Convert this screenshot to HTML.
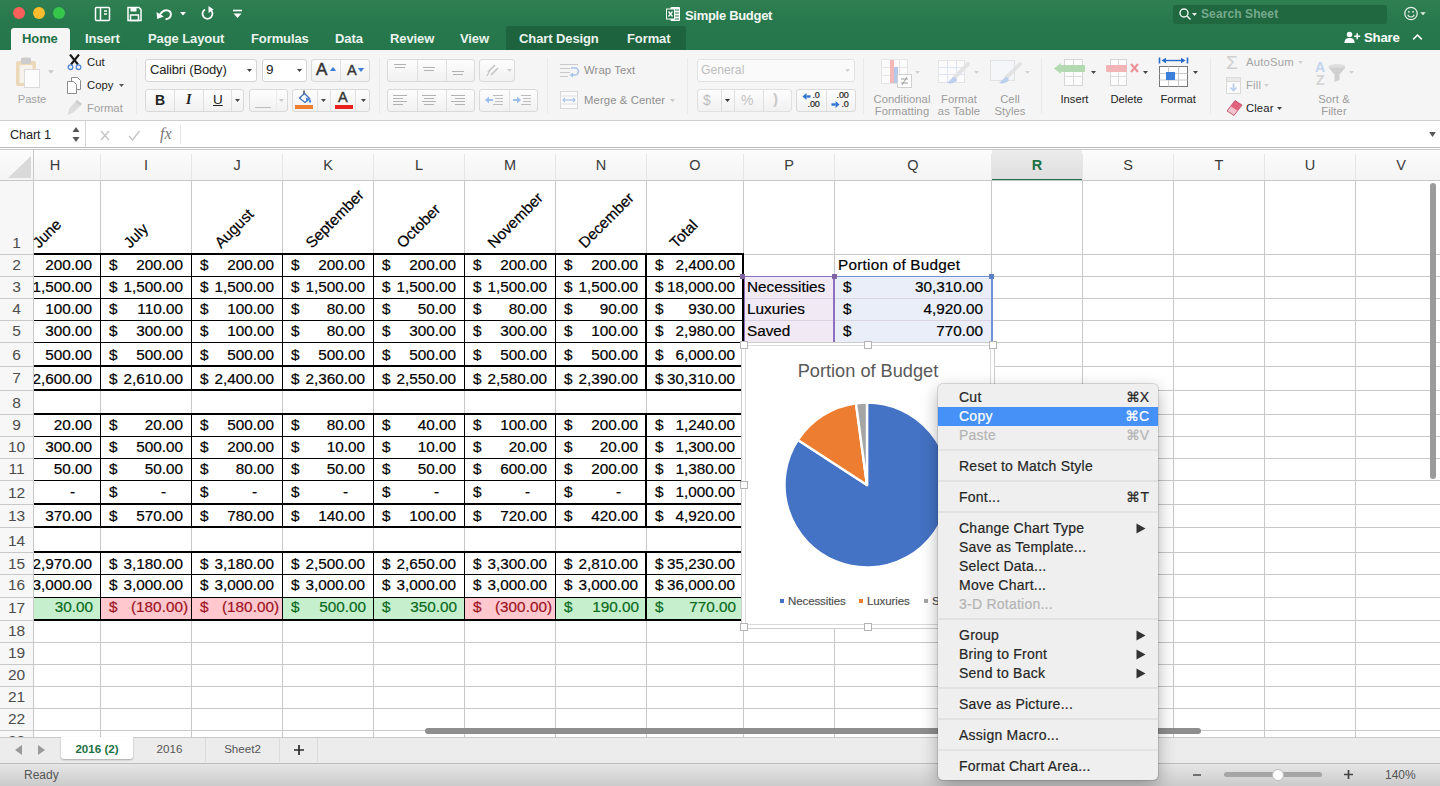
<!DOCTYPE html>
<html lang="en"><head><meta charset="utf-8"><title>Simple Budget</title>
<style>
*{box-sizing:border-box;margin:0;padding:0}
html,body{width:1440px;height:786px;overflow:hidden;background:#fff}
body{font-family:"Liberation Sans",sans-serif;font-size:13px;color:#222;position:relative}
.abs{position:absolute}
#top{position:absolute;left:0;top:0;width:1440px;height:50px;background:linear-gradient(#2f7f52,#27784c 45%,#25764a)}
.tab{position:absolute;top:28px;height:22px;line-height:21px;color:#eaf3ee;font-size:13px;font-weight:bold;white-space:nowrap;letter-spacing:-0.1px}
#ribbon{position:absolute;left:0;top:50px;width:1440px;height:71px;background:#f5f5f5;border-bottom:1px solid #cfcfcf}
.btn{position:absolute;background:linear-gradient(#fdfdfd,#f1f1f1);border:1px solid #d9d9d9;border-radius:3px}
.btnw{position:absolute;background:#fff;border:1px solid #d4d4d4;border-radius:3px}
.sep{position:absolute;top:8px;width:1px;height:56px;background:#e9e9e9}
.div{position:absolute;top:0;width:1px;height:100%;background:#e0e0e0}
.rl{position:absolute;font-size:12px;color:#222;white-space:nowrap}
.rg{position:absolute;font-size:12px;color:#9a9a9a;white-space:nowrap;text-align:center;line-height:12px}
#fbar{position:absolute;left:0;top:121px;width:1440px;height:27px;background:#fff;border-bottom:1px solid #bdbdbd}
#grid{position:absolute;left:0;top:150px;width:1440px;height:587px;background:#fff;overflow:hidden}
.vl{position:absolute;width:1px;background:#c8c8c8}
.hl{position:absolute;height:1px;background:#c8c8c8}
.ch{position:absolute;top:0;height:30px;line-height:31px;text-align:center;font-size:14.5px;color:#3a3a3a}
.rh{position:absolute;left:0;width:33px;text-align:center;font-size:15.5px;color:#4d4d4d;line-height:22px;padding-left:0px}
.c{position:absolute;font-size:15.3px;color:#000;white-space:nowrap;line-height:22px;-webkit-text-stroke:0.2px}
.bk{position:absolute;background:#000}
.mi{position:absolute;left:21px;font-size:14px;color:#262626;white-space:nowrap;line-height:19px;height:19px;letter-spacing:0.24px;-webkit-text-stroke:0.2px}
.mk{position:absolute;font-size:14px;color:#262626;white-space:nowrap;line-height:19px;height:19px;-webkit-text-stroke:0.2px}
.ms{position:absolute;left:0;width:220px;height:2px;background:#e2e2e2;margin-top:-1px}
.hd{position:absolute;width:8px;height:8px;background:#fff;border:1px solid #b4b4b4}
</style></head>
<body>
<div id="top"><div class="abs" style="left:13px;top:7px;width:12px;height:12px;border-radius:6px;background:#fc605b"></div><div class="abs" style="left:33px;top:7px;width:12px;height:12px;border-radius:6px;background:#fdbc30"></div><div class="abs" style="left:53px;top:7px;width:12px;height:12px;border-radius:6px;background:#34c749"></div><svg class="abs" style="left:92px;top:4px" width="160" height="20" viewBox="0 0 160 20" fill="none" stroke="#fff" stroke-width="1.5"><rect x="3.5" y="3.5" width="14" height="13" rx="1"/><path d="M8.5,3.5v13M12,7h3M12,10h3" /><path d="M36,3.5h11l2,2v11h-13z"/><rect x="38.5" y="3.5" width="6" height="4" fill="#fff" stroke="none"/><rect x="38.5" y="11" width="8" height="5.5" /><path d="M73.5,15.2C80.5,14.5 80.5,6.2 74.500,6.200C71.500,6.200 69.5,8 68,10.500" stroke-width="1.9"/><polygon points="64.5,8 65.200,15 71.800,12.600" fill="#fff" stroke="none"/><polygon points="88,8 94,8 91,11.5" fill="#fff" stroke="none"/><path d="M118,5.5a5,5 0 1 1 -5,0" stroke-width="1.8"/><polygon points="116.5,2 116.5,9 121.5,5.5" fill="#fff" stroke="none"/><path d="M141,6.5h9" stroke-width="1.6"/><polygon points="141.5,9.5 149.5,9.5 145.5,14" fill="#fff" stroke="none"/></svg><svg class="abs" style="left:666px;top:6px" width="15" height="16" viewBox="0 0 15 16"><rect x="4.5" y="1" width="9.5" height="14" rx="1" fill="#fff"/><path d="M8,4h5M8,7h5M8,10h5M8,13h5" stroke="#27784c" stroke-width="1"/><rect x="0.5" y="3" width="8" height="10" fill="#27784c" stroke="#fff" stroke-width="1"/><path d="M2.5,5.5l4,5M6.5,5.5l-4,5" stroke="#fff" stroke-width="1.3"/></svg><div class="abs" style="left:685px;top:8px;font-size:13px;line-height:16px;color:#f2f7f4;font-weight:bold;letter-spacing:-0.3px;white-space:nowrap">Simple Budget</div><div class="abs" style="left:1173px;top:5px;width:214px;height:19px;border-radius:3px;background:#1f6840"></div><svg class="abs" style="left:1178px;top:7px" width="22" height="14" viewBox="0 0 22 14"><circle cx="6" cy="6" r="4" fill="none" stroke="#e8f0ea" stroke-width="1.5"/><path d="M9,9l3.5,3.5" stroke="#e8f0ea" stroke-width="1.7"/><polygon points="14,6 19,6 16.5,9" fill="#e8f0ea"/></svg><div class="abs" style="left:1201px;top:7px;font-size:12px;line-height:15px;color:#76a88c;font-weight:bold;letter-spacing:0.1px">Search Sheet</div><svg class="abs" style="left:1403px;top:5px" width="32" height="17" viewBox="0 0 36 19"><circle cx="9" cy="9.5" r="7" fill="none" stroke="#e8f0ea" stroke-width="1.4"/><circle cx="6.6" cy="7.6" r="1" fill="#e8f0ea"/><circle cx="11.4" cy="7.6" r="1" fill="#e8f0ea"/><path d="M5.3,11a4,4 0 0 0 7.4,0" fill="none" stroke="#e8f0ea" stroke-width="1.3"/><polygon points="19.5,8 25.5,8 22.5,11.5" fill="#e8f0ea"/></svg><div class="abs" style="left:506px;top:26px;width:180px;height:24px;background:#1d633d;border-radius:3px 3px 0 0"></div><div class="abs" style="left:11px;top:28px;width:59px;height:23px;background:#f5f5f5;border-radius:3px 3px 0 0"></div><div class="tab" style="left:22px;color:#1e7145">Home</div><div class="tab" style="left:85px">Insert</div><div class="tab" style="left:148px">Page Layout</div><div class="tab" style="left:251px">Formulas</div><div class="tab" style="left:335px">Data</div><div class="tab" style="left:390px">Review</div><div class="tab" style="left:460px">View</div><div class="tab" style="left:519px">Chart Design</div><div class="tab" style="left:627px">Format</div><svg class="abs" style="left:1344px;top:31px" width="17" height="13" viewBox="0 0 20 15"><circle cx="6.5" cy="4" r="3.2" fill="#fff"/><path d="M0.5,14c0,-4.5 2.5,-6 6,-6s6,1.5 6,6z" fill="#fff"/><path d="M15.5,2.5v7M12,6h7" stroke="#fff" stroke-width="1.8"/></svg><div class="abs" style="left:1364px;top:29px;font-size:13.2px;line-height:17px;color:#fff;font-weight:bold;letter-spacing:-0.2px">Share</div><svg class="abs" style="left:1412px;top:33px" width="11" height="8" viewBox="0 0 14 10"><path d="M1.5,8l5.5,-5.5l5.5,5.5" fill="none" stroke="#fff" stroke-width="2"/></svg></div>
<div id="ribbon"><svg class="abs" style="left:15px;top:7px" width="28" height="32" viewBox="0 0 28 32"><rect x="1" y="4" width="20" height="25" rx="2" fill="#ecd9ba"/><rect x="4.5" y="8" width="13" height="18" fill="#f7f3ec"/><rect x="6" y="0.5" width="10" height="6.500" rx="1.500" fill="#cdcdcd"/><rect x="9.5" y="12.500" width="15" height="18" fill="#fcfcfc" stroke="#dcdcdc"/></svg><svg class="abs" style="left:47.5px;top:20.2px" width="6" height="4" viewBox="0 0 10 6"><polygon points="0,0 10,0 5,6" fill="#c9c9c9"/></svg><div class="rg" style="left:12px;top:43px;width:40px;font-size:11.2px;color:#a2a2a2">Paste</div><svg class="abs" style="left:67px;top:4px" width="16" height="17" viewBox="0 0 16 17"><path d="M3,0.5l8,10M12,0.5l-8,10" stroke="#1a1a1a" stroke-width="2.1"/><circle cx="3.5" cy="13.2" r="2.3" fill="none" stroke="#4f86d6" stroke-width="1.3"/><circle cx="11.5" cy="13.2" r="2.3" fill="none" stroke="#4f86d6" stroke-width="1.3"/></svg><div class="rl" style="left:87px;top:5px;font-size:11.3px;line-height:14px">Cut</div><svg class="abs" style="left:67px;top:27px" width="15" height="17" viewBox="0 0 15 17"><path d="M4.5,0.5h6l3,3v9h-9z" fill="#fff" stroke="#8c8c8c"/><path d="M0.5,4.5h6l3,3v9h-9z" fill="#fff" stroke="#8c8c8c"/></svg><div class="rl" style="left:87px;top:28px;font-size:11.3px;line-height:14px">Copy</div><svg class="abs" style="left:118.5px;top:33.5px" width="5" height="3" viewBox="0 0 10 6"><polygon points="0,0 10,0 5,6" fill="#555"/></svg><svg class="abs" style="left:66px;top:50px" width="17" height="16" viewBox="0 0 17 16"><path d="M9,2l5,4l-6,6l-6,3l1,-6z" fill="#dcdcdc"/><path d="M10,1l5,4" stroke="#cfcfcf" stroke-width="3"/></svg><div class="rl" style="left:87px;top:51px;font-size:11.3px;line-height:14px;color:#a2a2a2">Format</div><div class="sep" style="left:136px"></div><div class="btnw" style="left:145px;top:9px;width:112px;height:23px"></div><div class="rl" style="left:150px;top:12px;font-size:13px;line-height:16px;letter-spacing:-0.15px">Calibri (Body)</div><svg class="abs" style="left:246.5px;top:18.5px" width="5" height="3" viewBox="0 0 10 6"><polygon points="0,0 10,0 5,6" fill="#444"/></svg><div class="btnw" style="left:262px;top:9px;width:45px;height:23px"></div><div class="rl" style="left:266px;top:12px;font-size:13.5px;line-height:16px">9</div><svg class="abs" style="left:296.5px;top:18.5px" width="5" height="3" viewBox="0 0 10 6"><polygon points="0,0 10,0 5,6" fill="#444"/></svg><div class="btn" style="left:311px;top:9px;width:59px;height:23px"><div class="div" style="left:28px"></div></div><div class="rl" style="left:316px;top:11px;font-size:17px;line-height:18px;color:#333;-webkit-text-stroke:0.5px">A</div><svg class="abs" style="left:329px;top:17px" width="8" height="4" viewBox="0 0 8 5"><polygon points="0,5 8,5 4,0" fill="#3d7fd6"/></svg><div class="rl" style="left:347px;top:12px;font-size:14.5px;line-height:17px;color:#333;-webkit-text-stroke:0.4px">A</div><svg class="abs" style="left:357px;top:18px" width="8" height="4" viewBox="0 0 8 5"><polygon points="0,0 8,0 4,5" fill="#3d7fd6"/></svg><div class="btn" style="left:145px;top:39px;width:99px;height:23px"><div class="div" style="left:28px"></div><div class="div" style="left:57px"></div><div class="div" style="left:85px"></div></div><div class="rl" style="left:155px;top:42px;font-size:14px;line-height:16px;font-weight:bold">B</div><div class="rl" style="left:186px;top:42px;font-size:14px;line-height:16px;font-style:italic;font-family:'Liberation Serif',serif;font-weight:bold">I</div><div class="rl" style="left:213px;top:42px;font-size:13.5px;line-height:16px;text-decoration:underline">U</div><svg class="abs" style="left:234.5px;top:48.5px" width="5" height="3" viewBox="0 0 10 6"><polygon points="0,0 10,0 5,6" fill="#444"/></svg><div class="btn" style="left:249px;top:39px;width:39px;height:23px"><div class="div" style="left:26px;background:#ececec"></div></div><div class="abs" style="left:255px;top:57px;width:16px;height:1px;background:#bcbcbc"></div><svg class="abs" style="left:278.5px;top:48.5px" width="5" height="3" viewBox="0 0 10 6"><polygon points="0,0 10,0 5,6" fill="#c9c9c9"/></svg><div class="btn" style="left:292px;top:39px;width:78px;height:23px"><div class="div" style="left:24px"></div><div class="div" style="left:37px"></div><div class="div" style="left:62px"></div></div><svg class="abs" style="left:296px;top:40px" width="18" height="14" viewBox="0 0 18 14"><path d="M8,0.500v6" stroke="#333" stroke-width="1.3"/><path d="M3.500,8l5,-4.500l5,5l-4.500,4z" fill="#fff" stroke="#3f6fb8" stroke-width="1.3"/><path d="M9.500,7.500l4,1.500l-2.500,3z" fill="#3a7bd5"/><path d="M14,9c1.500,2 1.500,3.500 0,3.800c-1.500,-0.300 -1.500,-1.800 0,-3.800z" fill="#3a7bd5"/></svg><div class="abs" style="left:295px;top:55px;width:18px;height:4px;background:#ed7d31"></div><svg class="abs" style="left:320.5px;top:48.5px" width="5" height="3" viewBox="0 0 10 6"><polygon points="0,0 10,0 5,6" fill="#444"/></svg><div class="rl" style="left:338px;top:40px;font-size:14.5px;line-height:15px;color:#333;-webkit-text-stroke:0.4px">A</div><div class="abs" style="left:335px;top:55px;width:18px;height:4px;background:#e8211d"></div><svg class="abs" style="left:360.5px;top:48.5px" width="5" height="3" viewBox="0 0 10 6"><polygon points="0,0 10,0 5,6" fill="#444"/></svg><div class="sep" style="left:379px"></div><div class="btn" style="left:387px;top:9px;width:88px;height:23px"><div class="div" style="left:29px"></div><div class="div" style="left:58px"></div></div><svg class="abs" style="left:394px;top:12px" width="18" height="16" viewBox="0 0 18 16"><rect x="0" y="2" width="12" height="1" fill="#b2b2b2"/><rect x="1" y="5" width="10" height="1" fill="#b2b2b2"/></svg><svg class="abs" style="left:423px;top:12px" width="18" height="16" viewBox="0 0 18 16"><rect x="0" y="5" width="12" height="1" fill="#b2b2b2"/><rect x="1" y="8" width="10" height="1" fill="#b2b2b2"/></svg><svg class="abs" style="left:452px;top:12px" width="18" height="16" viewBox="0 0 18 16"><rect x="0" y="9" width="12" height="1" fill="#b2b2b2"/><rect x="1" y="12" width="10" height="1" fill="#b2b2b2"/></svg><div class="btn" style="left:479px;top:9px;width:36px;height:23px"></div><svg class="abs" style="left:485px;top:12px" width="18" height="16" viewBox="0 0 18 16"><path d="M3,10l7,-7M6,13l7,-7" stroke="#c4c4c4" stroke-width="1.6"/><path d="M2,14l3,-6" stroke="#c9c9c9" stroke-width="1.2"/></svg><svg class="abs" style="left:506.5px;top:18.5px" width="5" height="3" viewBox="0 0 10 6"><polygon points="0,0 10,0 5,6" fill="#cfcfcf"/></svg><div class="btn" style="left:387px;top:39px;width:88px;height:23px"><div class="div" style="left:29px"></div><div class="div" style="left:58px"></div></div><svg class="abs" style="left:393px;top:43px" width="18" height="16" viewBox="0 0 18 16"><rect x="0" y="2" width="14" height="1" fill="#b2b2b2"/><rect x="0" y="5" width="10" height="1" fill="#b2b2b2"/><rect x="0" y="8" width="14" height="1" fill="#b2b2b2"/><rect x="0" y="11" width="10" height="1" fill="#b2b2b2"/></svg><svg class="abs" style="left:422px;top:43px" width="18" height="16" viewBox="0 0 18 16"><rect x="0" y="2" width="14" height="1" fill="#b2b2b2"/><rect x="2" y="5" width="10" height="1" fill="#b2b2b2"/><rect x="0" y="8" width="14" height="1" fill="#b2b2b2"/><rect x="2" y="11" width="10" height="1" fill="#b2b2b2"/></svg><svg class="abs" style="left:451px;top:43px" width="18" height="16" viewBox="0 0 18 16"><rect x="0" y="2" width="14" height="1" fill="#b2b2b2"/><rect x="4" y="5" width="10" height="1" fill="#b2b2b2"/><rect x="0" y="8" width="14" height="1" fill="#b2b2b2"/><rect x="4" y="11" width="10" height="1" fill="#b2b2b2"/></svg><div class="btn" style="left:479px;top:39px;width:59px;height:23px"><div class="div" style="left:29px"></div></div><svg class="abs" style="left:489px;top:43px" width="18" height="16" viewBox="0 0 18 16"><rect x="4" y="2" width="10" height="1" fill="#bdbdbd"/><rect x="6" y="5" width="8" height="1" fill="#bdbdbd"/><rect x="6" y="8" width="8" height="1" fill="#bdbdbd"/><rect x="4" y="11" width="10" height="1" fill="#bdbdbd"/></svg><svg class="abs" style="left:517px;top:43px" width="18" height="16" viewBox="0 0 18 16"><rect x="4" y="2" width="10" height="1" fill="#bdbdbd"/><rect x="6" y="5" width="8" height="1" fill="#bdbdbd"/><rect x="6" y="8" width="8" height="1" fill="#bdbdbd"/><rect x="4" y="11" width="10" height="1" fill="#bdbdbd"/></svg><svg class="abs" style="left:485px;top:46px" width="8" height="8" viewBox="0 0 8 8"><polygon points="0,4 4,0.5 4,7.5" fill="#9dbdea"/><rect x="4" y="3" width="4" height="2" fill="#9dbdea"/></svg><svg class="abs" style="left:513px;top:46px" width="8" height="8" viewBox="0 0 8 8"><polygon points="8,4 4,0.5 4,7.5" fill="#9dbdea"/><rect x="0" y="3" width="4" height="2" fill="#9dbdea"/></svg><div class="sep" style="left:547px"></div><svg class="abs" style="left:560px;top:13px" width="18" height="16" viewBox="0 0 18 16"><rect x="0" y="1" width="18" height="1" fill="#c9c9c9"/><rect x="0" y="5" width="10" height="1" fill="#c9c9c9"/><rect x="0" y="9" width="10" height="1" fill="#c9c9c9"/><rect x="0" y="13" width="8" height="1" fill="#c9c9c9"/></svg><svg class="abs" style="left:568px;top:17px" width="12" height="11" viewBox="0 0 12 11"><path d="M3,1h4a3,3 0 0 1 0,7h-3" fill="none" stroke="#a9c4ea" stroke-width="1.6"/><polygon points="5,5.5 5,10.5 1.5,8" fill="#a9c4ea"/></svg><div class="rl" style="left:584px;top:13px;font-size:11.3px;line-height:14px;color:#8f8f8f;letter-spacing:0.1px">Wrap Text</div><svg class="abs" style="left:560px;top:41px" width="18" height="18" viewBox="0 0 18 18"><rect x="0.5" y="0.5" width="17" height="17" fill="#fafafa" stroke="#d9d9d9"/><path d="M0.5,5h17M0.5,13h17" stroke="#e2e2e2"/><path d="M3,9h12" stroke="#a9c4ea" stroke-width="1.3"/><path d="M5,7l-2,2l2,2M13,7l2,2l-2,2" stroke="#a9c4ea" fill="none" stroke-width="1.2"/></svg><div class="rl" style="left:584px;top:43px;font-size:11.3px;line-height:14px;color:#8f8f8f;letter-spacing:0.1px">Merge &amp; Center</div><svg class="abs" style="left:669.5px;top:48.5px" width="5" height="3" viewBox="0 0 10 6"><polygon points="0,0 10,0 5,6" fill="#c9c9c9"/></svg><div class="sep" style="left:687px"></div><div class="btnw" style="left:697px;top:9px;width:158px;height:23px;background:#fafafa;border-color:#e2e2e2"></div><div class="rl" style="left:701px;top:13px;font-size:12.2px;line-height:15px;color:#bdbdbd">General</div><svg class="abs" style="left:844.5px;top:18.5px" width="5" height="3" viewBox="0 0 10 6"><polygon points="0,0 10,0 5,6" fill="#d2d2d2"/></svg><div class="btn" style="left:697px;top:39px;width:95px;height:23px;border-color:#e0e0e0"><div class="div" style="left:23px"></div><div class="div" style="left:36px"></div><div class="div" style="left:65px"></div></div><div class="rl" style="left:703px;top:42px;font-size:14px;line-height:16px;color:#bdbdbd">$</div><svg class="abs" style="left:724.5px;top:48.5px" width="5" height="3" viewBox="0 0 10 6"><polygon points="0,0 10,0 5,6" fill="#333"/></svg><div class="rl" style="left:741px;top:42px;font-size:14px;line-height:16px;color:#c4c4c4">%</div><div class="rl" style="left:773px;top:41px;font-size:15px;line-height:16px;color:#c9c9c9;font-weight:bold">)</div><div class="btn" style="left:796px;top:39px;width:60px;height:23px"><div class="div" style="left:29px"></div></div><div class="rl" style="left:800px;width:19.500px;text-align:right;top:41px;font-size:9px;line-height:8.500px;color:#222;letter-spacing:-0.2px;-webkit-text-stroke:0.2px">.0<br>.00</div><div class="rl" style="left:829px;width:19.500px;top:41px;font-size:9px;line-height:8.500px;color:#222;letter-spacing:-0.2px;text-align:right;-webkit-text-stroke:0.2px">.00<br>.0</div><svg class="abs" style="left:802px;top:42.500px" width="9" height="7" viewBox="0 0 8 7"><polygon points="0,3.5 4,0 4,7" fill="#2f74d0"/><rect x="4" y="2.3" width="4" height="2.4" fill="#2f74d0"/></svg><svg class="abs" style="left:831px;top:50.500px" width="9" height="7" viewBox="0 0 8 7"><polygon points="8,3.5 4,0 4,7" fill="#2f74d0"/><rect x="0" y="2.3" width="4" height="2.4" fill="#2f74d0"/></svg><div class="sep" style="left:863px"></div><svg class="abs" style="left:881px;top:9px" width="32" height="30" viewBox="0 0 32 30"><rect x="0.5" y="0.5" width="26" height="24" fill="#fbfbfb" stroke="#e4e4e4"/><path d="M0.5,8.5h26M0.5,16.5h26M9.5,0.5v24M18.5,0.5v24" stroke="#e6e6e6"/><rect x="9" y="1" width="4" height="23" fill="#f3b8b8"/><rect x="13" y="8" width="4" height="16" fill="#b5c8ec"/><rect x="16.5" y="15.5" width="14" height="13" fill="#fff" stroke="#d0d0d0"/><path d="M20,20h7M20,24h7M26,18l-5,8" stroke="#999" stroke-width="1"/></svg><svg class="abs" style="left:914.5px;top:20.5px" width="5" height="3" viewBox="0 0 10 6"><polygon points="0,0 10,0 5,6" fill="#d2d2d2"/></svg><div class="rg" style="left:866px;top:43px;width:72px;font-size:11.2px;color:#9c9c9c;letter-spacing:0.1px">Conditional<br>Formatting</div><svg class="abs" style="left:938px;top:10px" width="34" height="28" viewBox="0 0 34 28"><rect x="0.5" y="0.5" width="26" height="22" fill="#fbfbfb" stroke="#e4e4e4"/><path d="M0.5,7.5h26M0.5,14.5h26M9.5,0.5v22M18.5,0.5v22" stroke="#dfe6f3"/><path d="M30,4l-14,14" stroke="#e3e3e3" stroke-width="4" stroke-linecap="round"/><path d="M17,17c-2,0 -5,3 -8,6c4,1 8,0 10,-3z" fill="#bcd0ee"/></svg><svg class="abs" style="left:973.5px;top:20.5px" width="5" height="3" viewBox="0 0 10 6"><polygon points="0,0 10,0 5,6" fill="#d2d2d2"/></svg><div class="rg" style="left:930px;top:43px;width:58px;font-size:11.2px;color:#9c9c9c;letter-spacing:0.1px">Format<br>as Table</div><svg class="abs" style="left:990px;top:10px" width="34" height="28" viewBox="0 0 34 28"><rect x="0.5" y="0.5" width="24" height="20" fill="#f4f6fa" stroke="#e2e2e2"/><path d="M30,4l-14,14" stroke="#e3e3e3" stroke-width="4" stroke-linecap="round"/><path d="M17,17c-2,0 -5,3 -8,6c4,1 8,0 10,-3z" fill="#bcd0ee"/></svg><svg class="abs" style="left:1024.5px;top:20.5px" width="5" height="3" viewBox="0 0 10 6"><polygon points="0,0 10,0 5,6" fill="#d2d2d2"/></svg><div class="rg" style="left:985px;top:43px;width:50px;font-size:11.2px;color:#9c9c9c;letter-spacing:0.1px">Cell<br>Styles</div><div class="sep" style="left:1041px"></div><svg class="abs" style="left:1053px;top:9px" width="34" height="28" viewBox="0 0 34 28"><rect x="11.5" y="0.5" width="18" height="26" fill="#fcfcfc" stroke="#d6d6d6"/><path d="M11.5,17.5h18M20.5,0.5v26" stroke="#dcdcdc"/><rect x="8" y="6" width="24" height="7" rx="1" fill="#b3d9b0"/><polygon points="1,9.5 8,4 8,15" fill="#b3d9b0"/></svg><svg class="abs" style="left:1090.5px;top:20.5px" width="5" height="3" viewBox="0 0 10 6"><polygon points="0,0 10,0 5,6" fill="#444"/></svg><div class="rl" style="left:1060.5px;top:42px;font-size:11.2px;line-height:14px">Insert</div><svg class="abs" style="left:1105px;top:9px" width="38" height="28" viewBox="0 0 38 28"><rect x="5.5" y="0.5" width="16" height="26" fill="#fcfcfc" stroke="#d6d6d6"/><path d="M5.5,17.5h16M13.5,0.5v26" stroke="#dcdcdc"/><rect x="1" y="6" width="21" height="7" rx="1" fill="#f2b4b7"/><path d="M26,5l7,8M33,5l-7,8" stroke="#ee8f95" stroke-width="2"/></svg><svg class="abs" style="left:1142.5px;top:20.5px" width="5" height="3" viewBox="0 0 10 6"><polygon points="0,0 10,0 5,6" fill="#444"/></svg><div class="rl" style="left:1110.5px;top:42px;font-size:11.2px;line-height:14px">Delete</div><svg class="abs" style="left:1158px;top:7px" width="32" height="32" viewBox="0 0 32 32"><path d="M1.5,0.5v6M29.5,0.5v6" stroke="#2a6cc9" stroke-width="1.6"/><path d="M5,3.5h21" stroke="#2a6cc9" stroke-width="1.4"/><polygon points="3.5,3.5 8,0.7 8,6.3" fill="#2a6cc9"/><polygon points="27.5,3.5 23,0.7 23,6.3" fill="#2a6cc9"/><rect x="1.500" y="9.5" width="28" height="20" fill="#fff" stroke="#777"/><path d="M1.5,16.5h28M1.5,23h28M10.5,9.5v20M20.5,9.5v20" stroke="#c9c9c9"/><rect x="8" y="15" width="9" height="8" fill="#3c7fdb"/></svg><svg class="abs" style="left:1192.5px;top:20.5px" width="5" height="3" viewBox="0 0 10 6"><polygon points="0,0 10,0 5,6" fill="#444"/></svg><div class="rl" style="left:1160.5px;top:42px;font-size:11.2px;line-height:14px">Format</div><div class="sep" style="left:1210px"></div><div class="rl" style="left:1226px;top:3px;font-size:19px;line-height:20px;color:#cfcfcf">&#931;</div><div class="rl" style="left:1246px;top:5px;font-size:11.3px;line-height:14px;color:#a5a5a5;letter-spacing:0.2px">AutoSum</div><svg class="abs" style="left:1297.5px;top:10.5px" width="5" height="3" viewBox="0 0 10 6"><polygon points="0,0 10,0 5,6" fill="#d2d2d2"/></svg><svg class="abs" style="left:1226px;top:27px" width="15" height="17" viewBox="0 0 15 17"><rect x="0.5" y="0.5" width="14" height="16" fill="#fafafa" stroke="#dadada"/><rect x="0.5" y="0.5" width="14" height="4" fill="#e9e9e9" stroke="#dadada"/><path d="M7.5,6.5v7M4.5,10.5l3,3l3,-3" stroke="#b9cdee" stroke-width="1.6" fill="none"/></svg><div class="rl" style="left:1246px;top:28px;font-size:11.3px;line-height:14px;color:#a5a5a5;letter-spacing:0.2px">Fill</div><svg class="abs" style="left:1263.5px;top:33.5px" width="5" height="3" viewBox="0 0 10 6"><polygon points="0,0 10,0 5,6" fill="#d2d2d2"/></svg><svg class="abs" style="left:1224px;top:49px" width="20" height="18" viewBox="0 0 20 18"><path d="M11,1.5l7,4.5l-8,10.5l-7,-4.5z" fill="#e0627d"/><path d="M6.6,7.3l7,4.5l-3.600,4.700l-7,-4.500z" fill="#f3c3cd"/><path d="M11,1.500l7,4.500l-8,10.500l-7,-4.500z" fill="none" stroke="#c6496a" stroke-width="0.8"/></svg><div class="rl" style="left:1246px;top:51px;font-size:11.3px;line-height:14px;color:#222;letter-spacing:0.1px">Clear</div><svg class="abs" style="left:1276.5px;top:56.5px" width="5" height="3" viewBox="0 0 10 6"><polygon points="0,0 10,0 5,6" fill="#444"/></svg><div class="rl" style="left:1315px;top:10.5px;font-size:14px;line-height:13px;color:#c2d3ee;font-weight:bold">A</div><div class="rl" style="left:1316px;top:23.5px;font-size:14px;line-height:13px;color:#d4d4d4;font-weight:bold">Z</div><svg class="abs" style="left:1327px;top:13px" width="20" height="20" viewBox="0 0 20 20"><ellipse cx="10" cy="3.5" rx="8.5" ry="2.500" fill="#dedede"/><path d="M1.500,4.500l6,7v7.500l5,-2v-5.500l6,-7z" fill="#d0d0d0"/></svg><svg class="abs" style="left:1348.5px;top:20.5px" width="5" height="3" viewBox="0 0 10 6"><polygon points="0,0 10,0 5,6" fill="#d2d2d2"/></svg><div class="rg" style="left:1310px;top:43px;width:48px;font-size:11.2px;color:#9c9c9c;letter-spacing:0.1px">Sort &amp;<br>Filter</div></div>
<div id="fbar"><div class="abs" style="left:10px;top:6px;font-size:12.7px;line-height:16px;color:#222;letter-spacing:-0.1px">Chart 1</div><svg class="abs" style="left:72px;top:5px" width="8" height="17" viewBox="0 0 8 17"><polygon points="0.5,6 7.5,6 4,1" fill="#555"/><polygon points="0.5,11 7.5,11 4,16" fill="#555"/></svg><div class="abs" style="left:85px;top:0;width:1px;height:27px;background:#d6d6d6"></div><svg class="abs" style="left:100px;top:9px" width="45" height="11" viewBox="0 0 45 11" fill="none" stroke="#c4c4c4" stroke-width="1.4"><path d="M1,1l8,9M9,1l-8,9"/><path d="M29,6l3.500,4l7,-9"/></svg><div class="abs" style="left:160px;top:4px;font-size:16px;line-height:18px;color:#777;font-family:'Liberation Serif',serif;font-style:italic">fx</div><div class="abs" style="left:180px;top:4px;width:1px;height:19px;background:#e2e2e2"></div><svg class="abs" style="left:1429px;top:11px" width="7" height="5" viewBox="0 0 8 6"><polygon points="0,0 8,0 4,6" fill="#555"/></svg></div>
<div class="abs" style="left:0;top:149px;width:1440px;height:1px;background:#c8c8c8"></div><div id="grid">
<div class="abs" style="left:0;top:0;width:1440px;height:30px;background:linear-gradient(#fcfcfc,#f4f4f4)"></div><div class="abs" style="left:0;top:30px;width:33px;height:560px;background:#f7f7f7"></div><div class="abs" style="left:992px;top:0;width:90px;height:31px;background:linear-gradient(#ececec,#dedede);border-bottom:2px solid #1e7145"></div><svg class="abs" style="left:8px;top:6px" width="23" height="22" viewBox="0 0 23 22"><polygon points="23,0 23,22 0,22" fill="#d9d9d9"/></svg><div class="vl" style="left:33px;top:30px;height:557px"></div><div class="vl" style="left:33px;top:0px;height:26px;background:#e6e6e6"></div><div class="vl" style="left:100px;top:30px;height:557px"></div><div class="vl" style="left:100px;top:4px;height:26px;background:#e6e6e6"></div><div class="vl" style="left:191px;top:30px;height:557px"></div><div class="vl" style="left:191px;top:4px;height:26px;background:#e6e6e6"></div><div class="vl" style="left:282px;top:30px;height:557px"></div><div class="vl" style="left:282px;top:4px;height:26px;background:#e6e6e6"></div><div class="vl" style="left:373px;top:30px;height:557px"></div><div class="vl" style="left:373px;top:4px;height:26px;background:#e6e6e6"></div><div class="vl" style="left:464px;top:30px;height:557px"></div><div class="vl" style="left:464px;top:4px;height:26px;background:#e6e6e6"></div><div class="vl" style="left:555px;top:30px;height:557px"></div><div class="vl" style="left:555px;top:4px;height:26px;background:#e6e6e6"></div><div class="vl" style="left:646px;top:30px;height:557px"></div><div class="vl" style="left:646px;top:4px;height:26px;background:#e6e6e6"></div><div class="vl" style="left:743px;top:30px;height:557px"></div><div class="vl" style="left:743px;top:4px;height:26px;background:#e6e6e6"></div><div class="vl" style="left:834px;top:30px;height:557px"></div><div class="vl" style="left:834px;top:4px;height:26px;background:#e6e6e6"></div><div class="vl" style="left:991px;top:30px;height:557px"></div><div class="vl" style="left:991px;top:4px;height:26px;background:#e6e6e6"></div><div class="vl" style="left:1082px;top:30px;height:557px"></div><div class="vl" style="left:1082px;top:4px;height:26px;background:#e6e6e6"></div><div class="vl" style="left:1173px;top:30px;height:557px"></div><div class="vl" style="left:1173px;top:4px;height:26px;background:#e6e6e6"></div><div class="vl" style="left:1264px;top:30px;height:557px"></div><div class="vl" style="left:1264px;top:4px;height:26px;background:#e6e6e6"></div><div class="vl" style="left:1355px;top:30px;height:557px"></div><div class="vl" style="left:1355px;top:4px;height:26px;background:#e6e6e6"></div><div class="hl" style="left:0;top:30px;width:1440px"></div><div class="hl" style="left:0;top:104px;width:1440px"></div><div class="hl" style="left:0;top:126px;width:1440px"></div><div class="hl" style="left:0;top:148px;width:1440px"></div><div class="hl" style="left:0;top:170px;width:1440px"></div><div class="hl" style="left:0;top:192px;width:1440px"></div><div class="hl" style="left:0;top:216px;width:1440px"></div><div class="hl" style="left:0;top:240px;width:1440px"></div><div class="hl" style="left:0;top:264px;width:1440px"></div><div class="hl" style="left:0;top:286px;width:1440px"></div><div class="hl" style="left:0;top:308px;width:1440px"></div><div class="hl" style="left:0;top:330px;width:1440px"></div><div class="hl" style="left:0;top:354px;width:1440px"></div><div class="hl" style="left:0;top:377px;width:1440px"></div><div class="hl" style="left:0;top:402px;width:1440px"></div><div class="hl" style="left:0;top:424px;width:1440px"></div><div class="hl" style="left:0;top:447px;width:1440px"></div><div class="hl" style="left:0;top:470px;width:1440px"></div><div class="hl" style="left:0;top:492px;width:1440px"></div><div class="hl" style="left:0;top:514px;width:1440px"></div><div class="hl" style="left:0;top:536px;width:1440px"></div><div class="hl" style="left:0;top:558px;width:1440px"></div><div class="hl" style="left:0;top:580px;width:1440px"></div><div class="ch" style="left:10px;width:90px">H</div><div class="ch" style="left:101px;width:90px">I</div><div class="ch" style="left:192px;width:90px">J</div><div class="ch" style="left:283px;width:90px">K</div><div class="ch" style="left:374px;width:90px">L</div><div class="ch" style="left:465px;width:90px">M</div><div class="ch" style="left:556px;width:90px">N</div><div class="ch" style="left:647px;width:96px">O</div><div class="ch" style="left:744px;width:90px">P</div><div class="ch" style="left:835px;width:156px">Q</div><div class="ch" style="left:992px;width:90px;font-weight:bold;color:#1e7145">R</div><div class="ch" style="left:1083px;width:90px">S</div><div class="ch" style="left:1174px;width:90px">T</div><div class="ch" style="left:1265px;width:90px">U</div><div class="ch" style="left:1356px;width:90px">V</div><div class="rh" style="top:82px">1</div><div class="rh" style="top:104px">2</div><div class="rh" style="top:126px">3</div><div class="rh" style="top:148px">4</div><div class="rh" style="top:170px">5</div><div class="rh" style="top:194px">6</div><div class="rh" style="top:217px">7</div><div class="rh" style="top:242px">8</div><div class="rh" style="top:264px">9</div><div class="rh" style="top:286px">10</div><div class="rh" style="top:308px">11</div><div class="rh" style="top:332px">12</div><div class="rh" style="top:355px">13</div><div class="rh" style="top:380px">14</div><div class="rh" style="top:403px">15</div><div class="rh" style="top:424px">16</div><div class="rh" style="top:447px">17</div><div class="rh" style="top:470px">18</div><div class="rh" style="top:492px">19</div><div class="rh" style="top:514px">20</div><div class="rh" style="top:536px">21</div><div class="rh" style="top:558px">22</div><div class="rh" style="top:580px">23</div>
<div class="abs" style="left:34px;top:447px;width:67px;height:23px;background:#c6efce"></div><div class="abs" style="left:101px;top:447px;width:91px;height:23px;background:#ffc7ce"></div><div class="abs" style="left:192px;top:447px;width:91px;height:23px;background:#ffc7ce"></div><div class="abs" style="left:283px;top:447px;width:91px;height:23px;background:#c6efce"></div><div class="abs" style="left:374px;top:447px;width:91px;height:23px;background:#c6efce"></div><div class="abs" style="left:465px;top:447px;width:91px;height:23px;background:#ffc7ce"></div><div class="abs" style="left:556px;top:447px;width:91px;height:23px;background:#c6efce"></div><div class="abs" style="left:647px;top:447px;width:97px;height:23px;background:#c6efce"></div><div class="abs" style="left:744px;top:127px;width:90px;height:65px;background:#f1eaf5"></div><div class="abs" style="left:835px;top:127px;width:156px;height:65px;background:#e9eef8"></div><div class="hl" style="left:744px;top:148px;width:247px;background:#d9d4e0"></div><div class="hl" style="left:744px;top:170px;width:247px;background:#d9d4e0"></div><div class="c" style="right:1348px;top:103.5px;color:#000">200.00</div><div class="c" style="right:1257px;top:103.5px;color:#000">200.00</div><div class="c" style="left:109px;top:103.5px;color:#000">$</div><div class="c" style="right:1166px;top:103.5px;color:#000">200.00</div><div class="c" style="left:200px;top:103.5px;color:#000">$</div><div class="c" style="right:1075px;top:103.5px;color:#000">200.00</div><div class="c" style="left:291px;top:103.5px;color:#000">$</div><div class="c" style="right:984px;top:103.5px;color:#000">200.00</div><div class="c" style="left:382px;top:103.5px;color:#000">$</div><div class="c" style="right:893px;top:103.5px;color:#000">200.00</div><div class="c" style="left:473px;top:103.5px;color:#000">$</div><div class="c" style="right:802px;top:103.5px;color:#000">200.00</div><div class="c" style="left:564px;top:103.5px;color:#000">$</div><div class="c" style="right:705px;top:103.5px;color:#000">2,400.00</div><div class="c" style="left:655px;top:103.5px;color:#000">$</div><div class="c" style="right:1348px;top:125.5px;color:#000">1,500.00</div><div class="c" style="right:1257px;top:125.5px;color:#000">1,500.00</div><div class="c" style="left:109px;top:125.5px;color:#000">$</div><div class="c" style="right:1166px;top:125.5px;color:#000">1,500.00</div><div class="c" style="left:200px;top:125.5px;color:#000">$</div><div class="c" style="right:1075px;top:125.5px;color:#000">1,500.00</div><div class="c" style="left:291px;top:125.5px;color:#000">$</div><div class="c" style="right:984px;top:125.5px;color:#000">1,500.00</div><div class="c" style="left:382px;top:125.5px;color:#000">$</div><div class="c" style="right:893px;top:125.5px;color:#000">1,500.00</div><div class="c" style="left:473px;top:125.5px;color:#000">$</div><div class="c" style="right:802px;top:125.5px;color:#000">1,500.00</div><div class="c" style="left:564px;top:125.5px;color:#000">$</div><div class="c" style="right:705px;top:125.5px;color:#000">18,000.00</div><div class="c" style="left:655px;top:125.5px;color:#000">$</div><div class="c" style="right:1348px;top:147.5px;color:#000">100.00</div><div class="c" style="right:1257px;top:147.5px;color:#000">110.00</div><div class="c" style="left:109px;top:147.5px;color:#000">$</div><div class="c" style="right:1166px;top:147.5px;color:#000">100.00</div><div class="c" style="left:200px;top:147.5px;color:#000">$</div><div class="c" style="right:1075px;top:147.5px;color:#000">80.00</div><div class="c" style="left:291px;top:147.5px;color:#000">$</div><div class="c" style="right:984px;top:147.5px;color:#000">50.00</div><div class="c" style="left:382px;top:147.5px;color:#000">$</div><div class="c" style="right:893px;top:147.5px;color:#000">80.00</div><div class="c" style="left:473px;top:147.5px;color:#000">$</div><div class="c" style="right:802px;top:147.5px;color:#000">90.00</div><div class="c" style="left:564px;top:147.5px;color:#000">$</div><div class="c" style="right:705px;top:147.5px;color:#000">930.00</div><div class="c" style="left:655px;top:147.5px;color:#000">$</div><div class="c" style="right:1348px;top:169.5px;color:#000">300.00</div><div class="c" style="right:1257px;top:169.5px;color:#000">300.00</div><div class="c" style="left:109px;top:169.5px;color:#000">$</div><div class="c" style="right:1166px;top:169.5px;color:#000">100.00</div><div class="c" style="left:200px;top:169.5px;color:#000">$</div><div class="c" style="right:1075px;top:169.5px;color:#000">80.00</div><div class="c" style="left:291px;top:169.5px;color:#000">$</div><div class="c" style="right:984px;top:169.5px;color:#000">300.00</div><div class="c" style="left:382px;top:169.5px;color:#000">$</div><div class="c" style="right:893px;top:169.5px;color:#000">300.00</div><div class="c" style="left:473px;top:169.5px;color:#000">$</div><div class="c" style="right:802px;top:169.5px;color:#000">100.00</div><div class="c" style="left:564px;top:169.5px;color:#000">$</div><div class="c" style="right:705px;top:169.5px;color:#000">2,980.00</div><div class="c" style="left:655px;top:169.5px;color:#000">$</div><div class="c" style="right:1348px;top:193.5px;color:#000">500.00</div><div class="c" style="right:1257px;top:193.5px;color:#000">500.00</div><div class="c" style="left:109px;top:193.5px;color:#000">$</div><div class="c" style="right:1166px;top:193.5px;color:#000">500.00</div><div class="c" style="left:200px;top:193.5px;color:#000">$</div><div class="c" style="right:1075px;top:193.5px;color:#000">500.00</div><div class="c" style="left:291px;top:193.5px;color:#000">$</div><div class="c" style="right:984px;top:193.5px;color:#000">500.00</div><div class="c" style="left:382px;top:193.5px;color:#000">$</div><div class="c" style="right:893px;top:193.5px;color:#000">500.00</div><div class="c" style="left:473px;top:193.5px;color:#000">$</div><div class="c" style="right:802px;top:193.5px;color:#000">500.00</div><div class="c" style="left:564px;top:193.5px;color:#000">$</div><div class="c" style="right:705px;top:193.5px;color:#000">6,000.00</div><div class="c" style="left:655px;top:193.5px;color:#000">$</div><div class="c" style="right:1348px;top:218.0px;color:#000">2,600.00</div><div class="c" style="right:1257px;top:218.0px;color:#000">2,610.00</div><div class="c" style="left:109px;top:218.0px;color:#000">$</div><div class="c" style="right:1166px;top:218.0px;color:#000">2,400.00</div><div class="c" style="left:200px;top:218.0px;color:#000">$</div><div class="c" style="right:1075px;top:218.0px;color:#000">2,360.00</div><div class="c" style="left:291px;top:218.0px;color:#000">$</div><div class="c" style="right:984px;top:218.0px;color:#000">2,550.00</div><div class="c" style="left:382px;top:218.0px;color:#000">$</div><div class="c" style="right:893px;top:218.0px;color:#000">2,580.00</div><div class="c" style="left:473px;top:218.0px;color:#000">$</div><div class="c" style="right:802px;top:218.0px;color:#000">2,390.00</div><div class="c" style="left:564px;top:218.0px;color:#000">$</div><div class="c" style="right:705px;top:218.0px;color:#000">30,310.00</div><div class="c" style="left:655px;top:218.0px;color:#000">$</div><div class="c" style="right:1348px;top:264.0px;color:#000">20.00</div><div class="c" style="right:1257px;top:264.0px;color:#000">20.00</div><div class="c" style="left:109px;top:264.0px;color:#000">$</div><div class="c" style="right:1166px;top:264.0px;color:#000">500.00</div><div class="c" style="left:200px;top:264.0px;color:#000">$</div><div class="c" style="right:1075px;top:264.0px;color:#000">80.00</div><div class="c" style="left:291px;top:264.0px;color:#000">$</div><div class="c" style="right:984px;top:264.0px;color:#000">40.00</div><div class="c" style="left:382px;top:264.0px;color:#000">$</div><div class="c" style="right:893px;top:264.0px;color:#000">100.00</div><div class="c" style="left:473px;top:264.0px;color:#000">$</div><div class="c" style="right:802px;top:264.0px;color:#000">200.00</div><div class="c" style="left:564px;top:264.0px;color:#000">$</div><div class="c" style="right:705px;top:264.0px;color:#000">1,240.00</div><div class="c" style="left:655px;top:264.0px;color:#000">$</div><div class="c" style="right:1348px;top:285.5px;color:#000">300.00</div><div class="c" style="right:1257px;top:285.5px;color:#000">500.00</div><div class="c" style="left:109px;top:285.5px;color:#000">$</div><div class="c" style="right:1166px;top:285.5px;color:#000">200.00</div><div class="c" style="left:200px;top:285.5px;color:#000">$</div><div class="c" style="right:1075px;top:285.5px;color:#000">10.00</div><div class="c" style="left:291px;top:285.5px;color:#000">$</div><div class="c" style="right:984px;top:285.5px;color:#000">10.00</div><div class="c" style="left:382px;top:285.5px;color:#000">$</div><div class="c" style="right:893px;top:285.5px;color:#000">20.00</div><div class="c" style="left:473px;top:285.5px;color:#000">$</div><div class="c" style="right:802px;top:285.5px;color:#000">20.00</div><div class="c" style="left:564px;top:285.5px;color:#000">$</div><div class="c" style="right:705px;top:285.5px;color:#000">1,300.00</div><div class="c" style="left:655px;top:285.5px;color:#000">$</div><div class="c" style="right:1348px;top:308.0px;color:#000">50.00</div><div class="c" style="right:1257px;top:308.0px;color:#000">50.00</div><div class="c" style="left:109px;top:308.0px;color:#000">$</div><div class="c" style="right:1166px;top:308.0px;color:#000">80.00</div><div class="c" style="left:200px;top:308.0px;color:#000">$</div><div class="c" style="right:1075px;top:308.0px;color:#000">50.00</div><div class="c" style="left:291px;top:308.0px;color:#000">$</div><div class="c" style="right:984px;top:308.0px;color:#000">50.00</div><div class="c" style="left:382px;top:308.0px;color:#000">$</div><div class="c" style="right:893px;top:308.0px;color:#000">600.00</div><div class="c" style="left:473px;top:308.0px;color:#000">$</div><div class="c" style="right:802px;top:308.0px;color:#000">200.00</div><div class="c" style="left:564px;top:308.0px;color:#000">$</div><div class="c" style="right:705px;top:308.0px;color:#000">1,380.00</div><div class="c" style="left:655px;top:308.0px;color:#000">$</div><div class="c" style="right:1365px;top:330.5px;color:#000">-</div><div class="c" style="right:1274px;top:330.5px;color:#000">-</div><div class="c" style="left:109px;top:330.5px;color:#000">$</div><div class="c" style="right:1183px;top:330.5px;color:#000">-</div><div class="c" style="left:200px;top:330.5px;color:#000">$</div><div class="c" style="right:1092px;top:330.5px;color:#000">-</div><div class="c" style="left:291px;top:330.5px;color:#000">$</div><div class="c" style="right:1001px;top:330.5px;color:#000">-</div><div class="c" style="left:382px;top:330.5px;color:#000">$</div><div class="c" style="right:910px;top:330.5px;color:#000">-</div><div class="c" style="left:473px;top:330.5px;color:#000">$</div><div class="c" style="right:819px;top:330.5px;color:#000">-</div><div class="c" style="left:564px;top:330.5px;color:#000">$</div><div class="c" style="right:705px;top:330.5px;color:#000">1,000.00</div><div class="c" style="left:655px;top:330.5px;color:#000">$</div><div class="c" style="right:1348px;top:354.5px;color:#000">370.00</div><div class="c" style="right:1257px;top:354.5px;color:#000">570.00</div><div class="c" style="left:109px;top:354.5px;color:#000">$</div><div class="c" style="right:1166px;top:354.5px;color:#000">780.00</div><div class="c" style="left:200px;top:354.5px;color:#000">$</div><div class="c" style="right:1075px;top:354.5px;color:#000">140.00</div><div class="c" style="left:291px;top:354.5px;color:#000">$</div><div class="c" style="right:984px;top:354.5px;color:#000">100.00</div><div class="c" style="left:382px;top:354.5px;color:#000">$</div><div class="c" style="right:893px;top:354.5px;color:#000">720.00</div><div class="c" style="left:473px;top:354.5px;color:#000">$</div><div class="c" style="right:802px;top:354.5px;color:#000">420.00</div><div class="c" style="left:564px;top:354.5px;color:#000">$</div><div class="c" style="right:705px;top:354.5px;color:#000">4,920.00</div><div class="c" style="left:655px;top:354.5px;color:#000">$</div><div class="c" style="right:1348px;top:402.5px;color:#000">2,970.00</div><div class="c" style="right:1257px;top:402.5px;color:#000">3,180.00</div><div class="c" style="left:109px;top:402.5px;color:#000">$</div><div class="c" style="right:1166px;top:402.5px;color:#000">3,180.00</div><div class="c" style="left:200px;top:402.5px;color:#000">$</div><div class="c" style="right:1075px;top:402.5px;color:#000">2,500.00</div><div class="c" style="left:291px;top:402.5px;color:#000">$</div><div class="c" style="right:984px;top:402.5px;color:#000">2,650.00</div><div class="c" style="left:382px;top:402.5px;color:#000">$</div><div class="c" style="right:893px;top:402.5px;color:#000">3,300.00</div><div class="c" style="left:473px;top:402.5px;color:#000">$</div><div class="c" style="right:802px;top:402.5px;color:#000">2,810.00</div><div class="c" style="left:564px;top:402.5px;color:#000">$</div><div class="c" style="right:705px;top:402.5px;color:#000">35,230.00</div><div class="c" style="left:655px;top:402.5px;color:#000">$</div><div class="c" style="right:1348px;top:423.5px;color:#000">3,000.00</div><div class="c" style="right:1257px;top:423.5px;color:#000">3,000.00</div><div class="c" style="left:109px;top:423.5px;color:#000">$</div><div class="c" style="right:1166px;top:423.5px;color:#000">3,000.00</div><div class="c" style="left:200px;top:423.5px;color:#000">$</div><div class="c" style="right:1075px;top:423.5px;color:#000">3,000.00</div><div class="c" style="left:291px;top:423.5px;color:#000">$</div><div class="c" style="right:984px;top:423.5px;color:#000">3,000.00</div><div class="c" style="left:382px;top:423.5px;color:#000">$</div><div class="c" style="right:893px;top:423.5px;color:#000">3,000.00</div><div class="c" style="left:473px;top:423.5px;color:#000">$</div><div class="c" style="right:802px;top:423.5px;color:#000">3,000.00</div><div class="c" style="left:564px;top:423.5px;color:#000">$</div><div class="c" style="right:705px;top:423.5px;color:#000">36,000.00</div><div class="c" style="left:655px;top:423.5px;color:#000">$</div><div class="c" style="right:1347px;top:446.0px;color:#0b6a1c">30.00</div><div class="c" style="right:1252px;top:446.0px;color:#9c1322">(180.00)</div><div class="c" style="left:109px;top:446.0px;color:#9c1322">$</div><div class="c" style="right:1161px;top:446.0px;color:#9c1322">(180.00)</div><div class="c" style="left:200px;top:446.0px;color:#9c1322">$</div><div class="c" style="right:1074px;top:446.0px;color:#0b6a1c">500.00</div><div class="c" style="left:291px;top:446.0px;color:#0b6a1c">$</div><div class="c" style="right:983px;top:446.0px;color:#0b6a1c">350.00</div><div class="c" style="left:382px;top:446.0px;color:#0b6a1c">$</div><div class="c" style="right:888px;top:446.0px;color:#9c1322">(300.00)</div><div class="c" style="left:473px;top:446.0px;color:#9c1322">$</div><div class="c" style="right:801px;top:446.0px;color:#0b6a1c">190.00</div><div class="c" style="left:564px;top:446.0px;color:#0b6a1c">$</div><div class="c" style="right:704px;top:446.0px;color:#0b6a1c">770.00</div><div class="c" style="left:655px;top:446.0px;color:#0b6a1c">$</div>
<div class="abs" style="left:0;top:105px;width:33px;height:366px;background:#f7f7f7"></div><div class="rh" style="top:104px">2</div><div class="hl" style="left:0;top:126px;width:33px"></div><div class="rh" style="top:126px">3</div><div class="hl" style="left:0;top:148px;width:33px"></div><div class="rh" style="top:148px">4</div><div class="hl" style="left:0;top:170px;width:33px"></div><div class="rh" style="top:170px">5</div><div class="hl" style="left:0;top:192px;width:33px"></div><div class="rh" style="top:194px">6</div><div class="hl" style="left:0;top:216px;width:33px"></div><div class="rh" style="top:217px">7</div><div class="hl" style="left:0;top:240px;width:33px"></div><div class="rh" style="top:242px">8</div><div class="hl" style="left:0;top:264px;width:33px"></div><div class="rh" style="top:264px">9</div><div class="hl" style="left:0;top:286px;width:33px"></div><div class="rh" style="top:286px">10</div><div class="hl" style="left:0;top:308px;width:33px"></div><div class="rh" style="top:308px">11</div><div class="hl" style="left:0;top:330px;width:33px"></div><div class="rh" style="top:332px">12</div><div class="hl" style="left:0;top:354px;width:33px"></div><div class="rh" style="top:355px">13</div><div class="hl" style="left:0;top:377px;width:33px"></div><div class="rh" style="top:380px">14</div><div class="hl" style="left:0;top:402px;width:33px"></div><div class="rh" style="top:403px">15</div><div class="hl" style="left:0;top:424px;width:33px"></div><div class="rh" style="top:424px">16</div><div class="hl" style="left:0;top:447px;width:33px"></div><div class="rh" style="top:447px">17</div><div class="hl" style="left:0;top:470px;width:33px"></div><div class="vl" style="left:33px;top:0;height:587px"></div><div class="c" style="left:838px;top:103.5px;letter-spacing:0.24px">Portion of Budget</div><div class="c" style="left:747px;top:125.5px">Necessities</div><div class="c" style="left:843px;top:125.5px">$</div><div class="c" style="right:457px;top:125.5px">30,310.00</div><div class="c" style="left:747px;top:147.5px">Luxuries</div><div class="c" style="left:843px;top:147.5px">$</div><div class="c" style="right:457px;top:147.5px">4,920.00</div><div class="c" style="left:747px;top:169.5px">Saved</div><div class="c" style="left:843px;top:169.5px">$</div><div class="c" style="right:457px;top:169.5px">770.00</div><div class="c" style="left:41px;top:84.5px;transform-origin:0 100%;transform:rotate(-45deg);line-height:16px;height:16px">June</div><div class="c" style="left:132px;top:84.5px;transform-origin:0 100%;transform:rotate(-45deg);line-height:16px;height:16px">July</div><div class="c" style="left:223px;top:84.5px;transform-origin:0 100%;transform:rotate(-45deg);line-height:16px;height:16px">August</div><div class="c" style="left:314px;top:84.5px;transform-origin:0 100%;transform:rotate(-45deg);line-height:16px;height:16px">September</div><div class="c" style="left:405px;top:84.5px;transform-origin:0 100%;transform:rotate(-45deg);line-height:16px;height:16px">October</div><div class="c" style="left:496px;top:84.5px;transform-origin:0 100%;transform:rotate(-45deg);line-height:16px;height:16px">November</div><div class="c" style="left:587px;top:84.5px;transform-origin:0 100%;transform:rotate(-45deg);line-height:16px;height:16px">December</div><div class="c" style="left:678px;top:84.5px;transform-origin:0 100%;transform:rotate(-45deg);line-height:16px;height:16px">Total</div>
<div class="bk" style="left:34px;top:103px;width:710px;height:2px"></div><div class="bk" style="left:34px;top:126px;width:710px;height:1px"></div><div class="bk" style="left:34px;top:148px;width:710px;height:1px"></div><div class="bk" style="left:34px;top:170px;width:710px;height:1px"></div><div class="bk" style="left:34px;top:192px;width:710px;height:1px"></div><div class="bk" style="left:34px;top:215px;width:710px;height:2px"></div><div class="bk" style="left:34px;top:239px;width:710px;height:2px"></div><div class="bk" style="left:100px;top:104px;width:1px;height:136px"></div><div class="bk" style="left:191px;top:104px;width:1px;height:136px"></div><div class="bk" style="left:282px;top:104px;width:1px;height:136px"></div><div class="bk" style="left:373px;top:104px;width:1px;height:136px"></div><div class="bk" style="left:464px;top:104px;width:1px;height:136px"></div><div class="bk" style="left:555px;top:104px;width:1px;height:136px"></div><div class="bk" style="left:646px;top:104px;width:1px;height:136px"></div><div class="bk" style="left:743px;top:104px;width:1px;height:136px"></div><div class="bk" style="left:645px;top:104px;width:2px;height:136px"></div><div class="bk" style="left:742px;top:104px;width:2px;height:136px"></div><div class="bk" style="left:34px;top:263px;width:710px;height:2px"></div><div class="bk" style="left:34px;top:286px;width:710px;height:1px"></div><div class="bk" style="left:34px;top:308px;width:710px;height:1px"></div><div class="bk" style="left:34px;top:330px;width:710px;height:1px"></div><div class="bk" style="left:34px;top:353px;width:710px;height:2px"></div><div class="bk" style="left:34px;top:376px;width:710px;height:2px"></div><div class="bk" style="left:100px;top:264px;width:1px;height:113px"></div><div class="bk" style="left:191px;top:264px;width:1px;height:113px"></div><div class="bk" style="left:282px;top:264px;width:1px;height:113px"></div><div class="bk" style="left:373px;top:264px;width:1px;height:113px"></div><div class="bk" style="left:464px;top:264px;width:1px;height:113px"></div><div class="bk" style="left:555px;top:264px;width:1px;height:113px"></div><div class="bk" style="left:646px;top:264px;width:1px;height:113px"></div><div class="bk" style="left:743px;top:264px;width:1px;height:113px"></div><div class="bk" style="left:645px;top:264px;width:2px;height:113px"></div><div class="bk" style="left:742px;top:264px;width:2px;height:113px"></div><div class="bk" style="left:34px;top:401px;width:710px;height:2px"></div><div class="bk" style="left:34px;top:424px;width:710px;height:1px"></div><div class="bk" style="left:34px;top:447px;width:710px;height:1px"></div><div class="bk" style="left:34px;top:469px;width:710px;height:2px"></div><div class="bk" style="left:100px;top:402px;width:1px;height:68px"></div><div class="bk" style="left:191px;top:402px;width:1px;height:68px"></div><div class="bk" style="left:282px;top:402px;width:1px;height:68px"></div><div class="bk" style="left:373px;top:402px;width:1px;height:68px"></div><div class="bk" style="left:464px;top:402px;width:1px;height:68px"></div><div class="bk" style="left:555px;top:402px;width:1px;height:68px"></div><div class="bk" style="left:646px;top:402px;width:1px;height:68px"></div><div class="bk" style="left:743px;top:402px;width:1px;height:68px"></div><div class="bk" style="left:645px;top:402px;width:2px;height:68px"></div><div class="bk" style="left:742px;top:402px;width:2px;height:68px"></div>
<div class="abs" style="left:744px;top:126px;width:91px;height:67px;border:1px solid #8e70c0;border-right-width:2px;border-bottom:1px solid #c9c3d6"></div><div class="abs" style="left:835px;top:126px;width:158px;height:67px;border:1px solid #7090d6;border-right-width:2px;border-left:0;border-bottom:1px solid #c3cbe0"></div><div class="abs" style="left:740px;top:124px;width:5px;height:5px;background:#8064a2"></div><div class="abs" style="left:832px;top:124px;width:5px;height:5px;background:#8064a2"></div><div class="abs" style="left:989px;top:124px;width:5px;height:5px;background:#5b7fc7"></div><div class="abs" style="left:741px;top:192px;width:254px;height:287px;background:#fff;border:1px solid #cdcdcd"></div><div class="abs" style="left:745px;top:195px;width:246px;height:280px;border:1px solid #dadada"></div><div class="abs" style="left:741px;top:211px;width:254px;text-align:center;font-size:18.2px;color:#595959;line-height:20px;letter-spacing:0">Portion of Budget</div><svg class="abs" style="left:777px;top:245px" width="180" height="180" viewBox="0 0 180 180"><path d="M90,90 L90.00,7.50 A82.5,82.5 0 1 1 20.89,44.95 Z" fill="#4472c4" stroke="#fff" stroke-width="2.4" stroke-linejoin="round"/><path d="M90,90 L20.89,44.95 A82.5,82.5 0 0 1 78.95,8.24 Z" fill="#ed7d31" stroke="#fff" stroke-width="2.4" stroke-linejoin="round"/><path d="M90,90 L78.95,8.24 A82.5,82.5 0 0 1 90.00,7.50 Z" fill="#a5a5a5" stroke="#fff" stroke-width="2.4" stroke-linejoin="round"/></svg><div class="abs" style="left:780px;top:449px;width:4px;height:4px;background:#4472c4"></div><div class="abs" style="left:788px;top:444px;font-size:11.5px;line-height:14px;color:#4d4d4d;white-space:nowrap;letter-spacing:-0.1px;-webkit-text-stroke:0.15px">Necessities</div><div class="abs" style="left:859px;top:449px;width:4px;height:4px;background:#ed7d31"></div><div class="abs" style="left:867px;top:444px;font-size:11.5px;line-height:14px;color:#4d4d4d;white-space:nowrap;letter-spacing:-0.1px;-webkit-text-stroke:0.15px">Luxuries</div><div class="abs" style="left:924px;top:449px;width:4px;height:4px;background:#a5a5a5"></div><div class="abs" style="left:932px;top:444px;font-size:11.5px;line-height:14px;color:#4d4d4d;white-space:nowrap;letter-spacing:-0.1px;-webkit-text-stroke:0.15px">Saved</div><div class="hd" style="left:740px;top:191px"></div><div class="hd" style="left:864px;top:191px"></div><div class="hd" style="left:989px;top:191px"></div><div class="hd" style="left:740px;top:331px"></div><div class="hd" style="left:989px;top:331px"></div><div class="hd" style="left:740px;top:473px"></div><div class="hd" style="left:864px;top:473px"></div><div class="hd" style="left:989px;top:473px"></div><div class="abs" style="left:1430px;top:33px;width:6px;height:296px;border-radius:3px;background:#9b9b9b"></div><div class="abs" style="left:425px;top:578px;width:776px;height:6px;border-radius:3px;background:#8e8e8e"></div></div>
<div class="abs" style="left:0;top:737px;width:1440px;height:27px;background:#ececec;border-top:1px solid #c9c9c9;border-bottom:1px solid #bcbcbc"></div><svg class="abs" style="left:12px;top:743px" width="40" height="14" viewBox="0 0 40 14"><polygon points="10,2 10,12 3,7" fill="#9a9a9a"/><polygon points="26,2 26,12 33,7" fill="#9a9a9a"/></svg><div class="abs" style="left:61px;top:737px;width:72px;height:22px;background:#fff;border-radius:0 0 3px 3px;box-shadow:0 1px 2px rgba(0,0,0,.3);text-align:center;line-height:24px;font-size:11.6px;font-weight:bold;color:#1e7145">2016 (2)</div><div class="abs" style="left:134px;top:738px;width:72px;height:24px;text-align:center;line-height:22px;font-size:11.6px;color:#555;border-right:1px solid #dcdcdc">2016</div><div class="abs" style="left:206px;top:738px;width:74px;height:24px;text-align:center;line-height:22px;font-size:11.6px;color:#555;border-right:1px solid #dcdcdc">Sheet2</div><div class="abs" style="left:280px;top:738px;width:38px;height:24px;border-right:1px solid #dcdcdc"></div><svg class="abs" style="left:294px;top:745px" width="10" height="10" viewBox="0 0 10 10"><path d="M5,0v10M0,5h10" stroke="#2b2b2b" stroke-width="1.7"/></svg><div class="abs" style="left:0;top:764px;width:1440px;height:22px;background:linear-gradient(#e6e6e6,#cbcbcb)"></div><div class="abs" style="left:24px;top:768px;font-size:12px;line-height:14px;color:#555">Ready</div><div class="abs" style="left:1193px;top:774px;width:8px;height:2px;background:#6e6e6e"></div><div class="abs" style="left:1224px;top:772px;width:98px;height:5px;border-radius:2.5px;background:#a6a6a6"></div><div class="abs" style="left:1272px;top:769px;width:12px;height:12px;border-radius:6px;background:#fff;border:1px solid #bdbdbd"></div><svg class="abs" style="left:1344px;top:770px" width="9" height="9" viewBox="0 0 9 9"><path d="M4.5,0v9M0,4.5h9" stroke="#444" stroke-width="1.7"/></svg><div class="abs" style="left:1385px;top:768px;font-size:12px;line-height:14px;color:#555">140%</div><div class="abs" style="left:938px;top:384px;width:220px;height:396px;background:#efefef;border-radius:5px;box-shadow:0 0 0 1px rgba(0,0,0,.12),0 6px 18px rgba(0,0,0,.30);overflow:hidden"><div class="mi" style="top:4px;color:#262626">Cut</div><div class="mk" style="right:9px;top:4px;color:#262626">&#8984;X</div><div class="abs" style="left:0;top:23px;width:220px;height:19px;background:#4691f7"></div><div class="mi" style="top:23px;color:#fff">Copy</div><div class="mk" style="right:9px;top:23px;color:#fff">&#8984;C</div><div class="mi" style="top:42px;color:#b4b4b4">Paste</div><div class="mk" style="right:9px;top:42px;color:#b4b4b4">&#8984;V</div><div class="ms" style="top:66px"></div><div class="mi" style="top:73px;color:#262626">Reset to Match Style</div><div class="ms" style="top:97px"></div><div class="mi" style="top:104px;color:#262626">Font...</div><div class="mk" style="right:9px;top:104px;color:#262626">&#8984;T</div><div class="ms" style="top:128px"></div><div class="mi" style="top:135px;color:#262626">Change Chart Type</div><svg class="abs" style="left:198px;top:139px" width="10" height="11" viewBox="0 0 10 11"><polygon points="0.5,0.5 9.5,5.5 0.5,10.5" fill="#333"/></svg><div class="mi" style="top:154px;color:#262626">Save as Template...</div><div class="mi" style="top:173px;color:#262626">Select Data...</div><div class="mi" style="top:192px;color:#262626">Move Chart...</div><div class="mi" style="top:211px;color:#b4b4b4">3-D Rotation...</div><div class="ms" style="top:235px"></div><div class="mi" style="top:242px;color:#262626">Group</div><svg class="abs" style="left:198px;top:246px" width="10" height="11" viewBox="0 0 10 11"><polygon points="0.5,0.5 9.5,5.5 0.5,10.5" fill="#333"/></svg><div class="mi" style="top:261px;color:#262626">Bring to Front</div><svg class="abs" style="left:198px;top:265px" width="10" height="11" viewBox="0 0 10 11"><polygon points="0.5,0.5 9.5,5.5 0.5,10.5" fill="#333"/></svg><div class="mi" style="top:280px;color:#262626">Send to Back</div><svg class="abs" style="left:198px;top:284px" width="10" height="11" viewBox="0 0 10 11"><polygon points="0.5,0.5 9.5,5.5 0.5,10.5" fill="#333"/></svg><div class="ms" style="top:304px"></div><div class="mi" style="top:311px;color:#262626">Save as Picture...</div><div class="ms" style="top:335px"></div><div class="mi" style="top:342px;color:#262626">Assign Macro...</div><div class="ms" style="top:366px"></div><div class="mi" style="top:373px;color:#262626">Format Chart Area...</div></div>
</body></html>
